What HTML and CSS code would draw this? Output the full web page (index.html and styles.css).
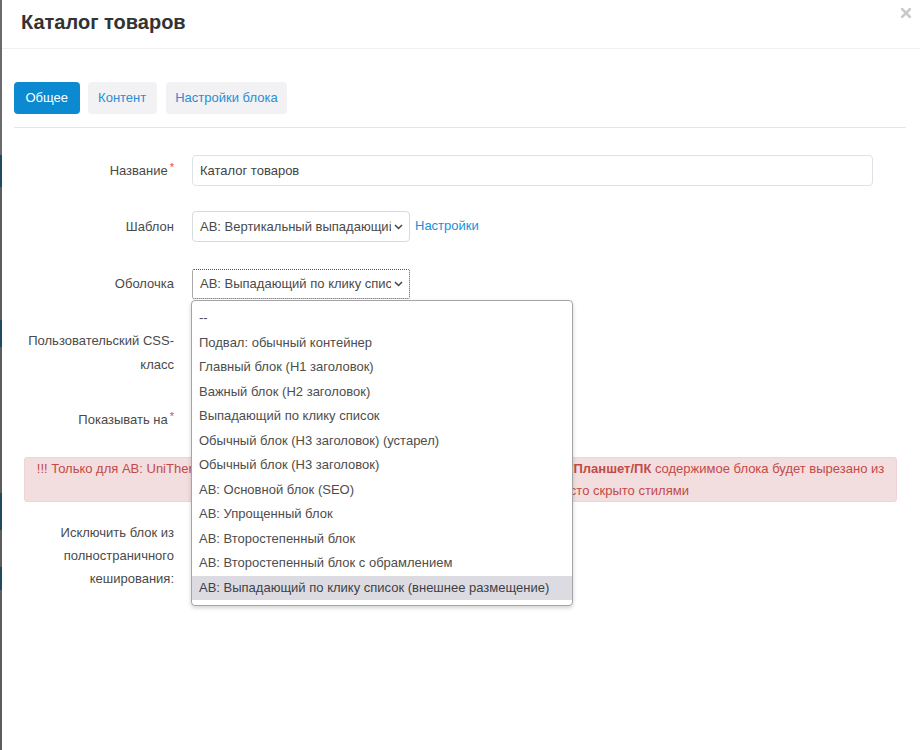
FILE: index.html
```html
<!DOCTYPE html>
<html lang="ru">
<head>
<meta charset="utf-8">
<title>Каталог товаров</title>
<link rel="stylesheet" href="styles.css">
</head>
<body>
<div class="edge"></div>
<div class="modal">
  <div class="modal-header">
    <h1 class="title">Каталог товаров</h1>
    <span class="close" aria-label="Закрыть">
      <svg width="10" height="10" viewBox="0 0 10 10"><path d="M1 1 L9 9 M9 1 L1 9" stroke="#c9c9c9" stroke-width="2.6" stroke-linecap="square"/></svg>
    </span>
  </div>
  <div class="modal-body">
    <div class="tabs">
      <span class="tab active">Общее</span>
      <span class="tab t2">Контент</span>
      <span class="tab t3">Настройки блока</span>
    </div>

    <div class="form">
      <div class="row">
        <label class="label one">Название<span class="req">*</span></label>
        <div class="control">
          <div class="input">Каталог товаров</div>
        </div>
      </div>

      <div class="row">
        <label class="label one">Шаблон</label>
        <div class="control inline">
          <div class="select">
            <span class="select-text">AB: Вертикальный выпадающий</span>
            <svg class="chev" width="9" height="6" viewBox="0 0 9 6"><path d="M1 1 L4.5 4.5 L8 1" fill="none" stroke="#444" stroke-width="1.5"/></svg>
          </div>
          <a class="link">Настройки</a>
        </div>
      </div>

      <div class="row">
        <label class="label one">Оболочка</label>
        <div class="control inline">
          <div class="select focused">
            <span class="select-text">AB: Выпадающий по клику список (внешнее размещение)</span>
            <svg class="chev" width="9" height="6" viewBox="0 0 9 6"><path d="M1 1 L4.5 4.5 L8 1" fill="none" stroke="#444" stroke-width="1.5"/></svg>
          </div>
          <ul class="dropdown">
            <li>--</li>
            <li>Подвал: обычный контейнер</li>
            <li>Главный блок (H1 заголовок)</li>
            <li>Важный блок (H2 заголовок)</li>
            <li>Выпадающий по клику список</li>
            <li>Обычный блок (H3 заголовок) (устарел)</li>
            <li>Обычный блок (H3 заголовок)</li>
            <li>AB: Основной блок (SEO)</li>
            <li>AB: Упрощенный блок</li>
            <li>AB: Второстепенный блок</li>
            <li>AB: Второстепенный блок с обрамлением</li>
            <li class="hl">AB: Выпадающий по клику список (внешнее размещение)</li>
          </ul>
        </div>
      </div>

      <div class="row css-row">
        <label class="label multi">Пользовательский CSS-класс</label>
        <div class="control">
          <div class="input small"></div>
        </div>
      </div>

      <div class="row show-row">
        <label class="label multi">Показывать на<span class="req">*</span></label>
        <div class="control"></div>
      </div>

      <div class="alert">!!! Только для AB: UniTheme2 — если блок скрыт на каком-либо из устройств Телефоны/<b>Планшет/ПК</b> содержимое блока будет вырезано из<br>HTML-кода страницы для заданных устройств, а не просто скрыто стилями</div>

      <div class="row cache-row">
        <label class="label multi tight">Исключить блок из полностраничного кеширования:</label>
        <div class="control"></div>
      </div>
    </div>
  </div>
</div>
</body>
</html>
```

FILE: styles.css
```css
html, body {
  margin: 0;
  padding: 0;
  height: 100%;
}

body {
  display: flex;
  font-family: "Liberation Sans", Arial, sans-serif;
  font-size: 13px;
  color: #4a4a4a;
  background: #fff;
}

.edge {
  width: 2px;
  flex: none;
  background: linear-gradient(to bottom,
    #6a6a6a 0, #6a6a6a 155px,
    #1f4b5e 155px, #1f4b5e 187px,
    #5c5c5c 187px, #5c5c5c 320px,
    #1f4b5e 320px, #1f4b5e 347px,
    #5c5c5c 347px, #5c5c5c 493px,
    #1f4b5e 493px, #1f4b5e 530px,
    #5c5c5c 530px, #5c5c5c 567px,
    #1f4b5e 567px, #1f4b5e 590px,
    #5c5c5c 590px, #5c5c5c 100%);
}

.modal {
  flex: 1;
  position: relative;
  background: #fff;
}

.modal-header {
  height: 48px;
  border-bottom: 1px solid #eeeff2;
  padding-left: 19px;
  position: relative;
}

.title {
  margin: 0;
  font-size: 20px;
  font-weight: bold;
  color: #333;
  line-height: 45px;
}

.close {
  position: absolute;
  right: 9px;
  top: 8px;
  display: block;
  width: 10px;
  height: 10px;
}

.close svg {
  display: block;
}

.modal-body {
  padding: 0 14px 0 12px;
}

.tabs {
  display: flex;
  gap: 8px;
  margin-top: 33px;
  padding-bottom: 13px;
  border-bottom: 1px solid #e0e5ee;
}

.tab {
  height: 32px;
  line-height: 32px;
  padding: 0 11.5px;
  border-radius: 4px;
  background: #f2f2f4;
  color: #2b8dd3;
}

.tab.t2 {
  padding: 0 10.5px;
}

.tab.t3 {
  margin-left: 1px;
  padding: 0 9.5px;
}

.tab.active {
  background: #0b8ad2;
  color: #fff;
}

.form {
  margin-top: 27px;
}

.row {
  display: grid;
  grid-template-columns: 160px 1fr;
  column-gap: 18px;
  margin-bottom: 25px;
}

.row:nth-child(2) {
  margin-bottom: 26px;
}

.label {
  text-align: right;
  color: #4a4a4a;
}

.label.one {
  line-height: 31px;
}

.label.multi {
  padding-top: 5px;
  line-height: 24px;
}

.label.tight {
  padding-top: 0;
  line-height: 23px;
}

.req {
  color: #e24a4a;
  font-size: 11px;
  line-height: 0;
  vertical-align: 4px;
  margin-left: 2px;
}

.control {
  position: relative;
  min-height: 31px;
}

.control.inline {
  display: flex;
  align-items: center;
  gap: 5px;
}

.input {
  height: 31px;
  box-sizing: border-box;
  width: 681px;
  border: 1px solid #dde2e8;
  border-radius: 4px;
  padding-left: 7px;
  line-height: 29px;
  color: #444;
}

.input.small {
  width: 218px;
}

.select {
  width: 218px;
  height: 31px;
  box-sizing: border-box;
  border: 1px solid #d6dbe2;
  border-radius: 4px;
  display: flex;
  align-items: center;
  padding: 0 6px 0 7px;
  color: #4a4a4a;
}

.select.focused {
  height: 30px;
  border: 1px dotted #555;
  border-radius: 2px;
}

.select-text {
  flex: 1;
  white-space: nowrap;
  overflow: hidden;
  font-size: 13px;
}

.chev {
  flex: none;
  margin-left: 3px;
}

.link {
  color: #1a8fd8;
  cursor: pointer;
  margin-top: -3px;
}

.dropdown {
  position: absolute;
  top: 32px;
  left: -1px;
  width: 382px;
  box-sizing: border-box;
  margin: 0;
  padding: 5px 0;
  list-style: none;
  background: #fff;
  border: 1px solid #a5a5a8;
  border-radius: 4px;
  box-shadow: 0 2px 4px rgba(0, 0, 0, 0.18);
  z-index: 10;
}

.dropdown li {
  height: 24.5px;
  line-height: 24.5px;
  padding-left: 7px;
  color: #4d4d4d;
  white-space: nowrap;
}

.dropdown li.hl {
  background: #dcdbe2;
  color: #3f3f45;
}

.css-row {
  margin-bottom: 26px;
}

.show-row {
  margin-bottom: 23px;
}

.alert {
  margin: 0 9px 0 10px;
  background: #f2dede;
  border: 1px solid #eed3d7;
  border-radius: 3px;
  color: #c24a48;
  text-align: center;
  padding: 0;
  line-height: 22px;
  height: 45px;
  box-sizing: border-box;
  white-space: nowrap;
  overflow: hidden;
}

.alert b {
  font-weight: bold;
}

.cache-row {
  margin-top: 19px;
}
```
